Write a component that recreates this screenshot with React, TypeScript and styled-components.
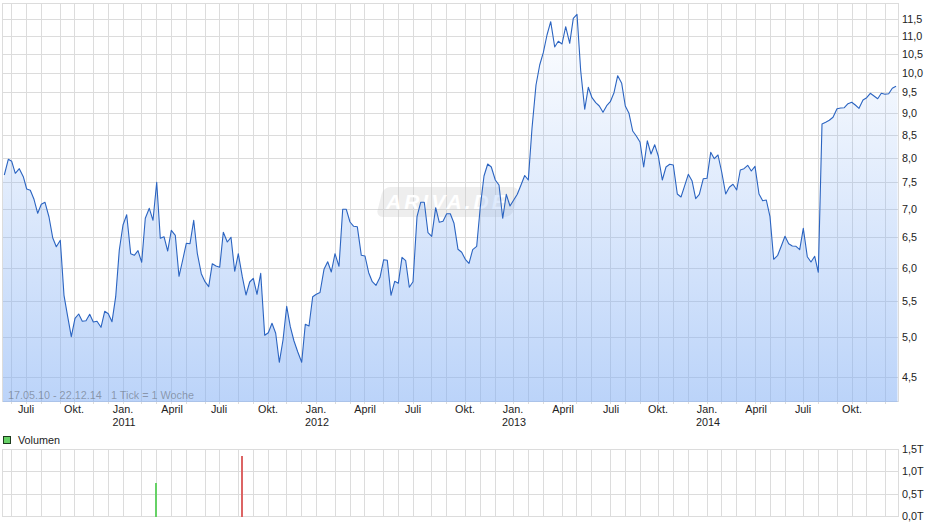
import React from "react";
import styled, { createGlobalStyle } from "styled-components";

const GlobalStyle = createGlobalStyle`
  html, body { margin: 0; padding: 0; background: #fff; }
  body { font-family: "Liberation Sans", Arial, sans-serif; }
`;

const Page = styled.div`
  width: 940px;
  height: 526px;
  display: flex;
  flex-direction: column;
  background: #fff;
  overflow: hidden;
`;

const PriceSvg = styled.svg`
  display: block;
  flex: none;
  width: 940px;
  height: 432px;
`;

const VolumeSvg = styled.svg`
  display: block;
  flex: none;
  width: 940px;
  height: 80px;
  overflow: visible;
`;

const Legend = styled.div`
  flex: none;
  height: 14px;
  box-sizing: border-box;
  padding: 2px 0 0 3px;
  display: flex;
  align-items: center;
  gap: 7px;
  font-size: 10.8px;
  color: #222;
`;

const Swatch = styled.span`
  width: 6px;
  height: 6px;
  border: 1px solid #1c3a1c;
  background: #66d166;
`;

const GridLine = styled.line`
  stroke: #dcdcdc;
  stroke-width: 1;
  shape-rendering: crispEdges;
`;

const Label = styled.text<{ $anchor?: string }>`
  font-family: "Liberation Sans", Arial, sans-serif;
  font-size: 10.8px;
  fill: #222;
  text-anchor: ${(p) => p.$anchor ?? "start"};
`;

const Note = styled.text`
  font-family: "Liberation Sans", Arial, sans-serif;
  font-size: 10.8px;
  fill: rgba(60, 60, 60, 0.42);
`;

const WatermarkText = styled.text`
  font-family: "Liberation Sans", Arial, sans-serif;
  font-size: 21px;
  font-weight: 700;
  font-style: italic;
  letter-spacing: 3px;
  fill: #ffffff;
`;

const xGrid = [
  2, 11, 26, 41, 60, 74, 93, 108, 123, 141, 156, 171, 186, 205, 219, 238, 253, 268, 286, 301, 316,
  335, 350, 364, 383, 398, 413, 431, 446, 465, 480, 495, 513, 528, 543, 562, 576, 591, 610, 625,
  640, 658, 673, 688, 707, 721, 736, 755, 770, 785, 803, 818, 837, 852, 866, 885, 898,
];

const priceLines: [number, string | null][] = [
  [3, null], [19, "11,5"], [36, "11,0"], [54, "10,5"], [73, "10,0"], [92, "9,5"], [113, "9,0"],
  [135, "8,5"], [158, "8,0"], [182, "7,5"], [209, "7,0"], [237, "6,5"], [268, "6,0"], [301, "5,5"],
  [337, "5,0"], [377, "4,5"], [401, null],
];

const volumeLines: [number, string][] = [[3, "1,5T"], [25, "1,0T"], [48, "0,5T"], [70, "0,0T"]];

const months: [number, string, string?][] = [
  [26, "Juli"], [74, "Okt."], [123, "Jan.", "2011"], [172, "April"], [219, "Juli"], [268, "Okt."],
  [316, "Jan.", "2012"], [365, "April"], [413, "Juli"], [465, "Okt."], [513, "Jan.", "2013"],
  [563, "April"], [611, "Juli"], [658, "Okt."], [707, "Jan.", "2014"], [756, "April"], [803, "Juli"],
  [852, "Okt."],
];

const pts: [number, number][] = [
  [4.3,175],[8.3,159.3],[11.7,161.3],[15.3,173.3],[19.3,168.7],[23.3,176.7],[26.7,189],[30.3,190.3],[34,199.3],[37.7,213.3],
  [41.3,204.3],[45,202.3],[49,217],[52.7,237.7],[56.3,246.7],[60.3,240.3],[64,295.3],[67.7,316.7],[71.3,336.7],[75,318.3],
  [78.7,314],[82.3,321.3],[86,320.7],[89.7,314.3],[93.3,322],[97,321.3],[101,327.3],[104.7,311.3],[108.3,313.7],[112,321.7],
  [115.7,296.7],[119.3,250],[123,225],[126.7,214.7],[130.7,253.7],[134.3,255.3],[138,250.7],[141.7,262.3],[145.3,218.3],[149.3,208.3],
  [153,220.3],[156.7,182.3],[160.3,238.3],[164,236.7],[167.7,251],[171.3,230.3],[175.3,235.3],[179,276.3],[182.7,260],[186.3,243.3],
  [190,243.7],[193.7,220.3],[197.3,253.3],[201.3,273.7],[205,281.7],[208.7,286.7],[212.3,263.7],[216,266],[219.7,267.3],[223.3,232.3],
  [227.3,242],[231,237.3],[234.7,271.3],[238.3,253.7],[242.3,276.7],[246,295],[249.7,282],[253.3,278.3],[257,294.3],[260.7,273.3],
  [264.7,335.3],[268.3,332.7],[272,323.3],[275.7,333.3],[279.3,362.3],[283,340],[286.7,306.3],[290.3,326.7],[294,341],[297.7,351.7],
  [301.7,362.3],[305.3,324.3],[309,326],[312.7,296.7],[316.3,294.3],[320,292.5],[324,269.3],[327.7,261.7],[331.3,272],[335,253.7],
  [339,266.3],[342.7,209.3],[346.3,209.3],[350,222],[353.7,226.3],[357.3,226.7],[361.3,255.3],[365,256],[368.7,272.7],[372.3,281.7],
  [376,285.3],[380,277.3],[383.7,259.7],[387.3,260.3],[391,295.3],[394.7,281.3],[398.3,283.3],[402,257.3],[405.7,260.7],[409.3,287.3],
  [413,281.7],[417,216.7],[420.7,202.3],[424.3,202.3],[428,232.7],[431.7,236.3],[435.7,207.7],[439.3,222.3],[443,221.3],[446.7,213.7],
  [450.3,213.7],[454,223.3],[458,249.3],[461.7,252.3],[465.3,259.3],[469,263.3],[472.7,249.7],[476.7,246.3],[480.3,206.7],[484,176],
  [487.7,164],[491.3,167],[495.3,180],[499,185],[502.7,218.3],[506.3,194.3],[510,206],[513.7,200],[517.3,194.3],[521,185],
  [524.7,175.5],[528.3,180],[532,128.3],[536,85],[539.7,65],[543.3,52.7],[547,35],[550.7,21.7],[554.7,47],[558.3,41.3],
  [562,44],[565.7,26.7],[569.7,43.3],[573.3,18.3],[577,14.3],[580.7,70.7],[584.7,109.3],[588.3,87.3],[592,97.7],[595.7,102.7],
  [599.3,106],[603,112.3],[606.7,105.7],[610.3,101.7],[614,92.7],[617.7,75.7],[621.7,83.3],[625.3,106],[629,113.3],[632.7,131],
  [636.3,136],[640,142],[643.7,167],[647.3,140.7],[651,154],[654.7,144.7],[658.3,156],[662.3,180],[666,167],[669.7,164.3],
  [673.3,165],[677.3,194],[681,197],[684.7,185.7],[688.3,174.3],[692,180.7],[695.7,198.7],[699.3,194.3],[703.3,178.7],[707,178.3],
  [710.7,152.3],[714.3,158.7],[718,155],[721.7,172],[725.7,194],[729.3,187.3],[733,184.3],[736.7,190],[740.3,170],[744,168.7],
  [747.7,165.3],[751.3,171],[755,166.3],[759,194],[762.7,200.7],[766.3,200],[770,216.7],[773.7,259.3],[777.7,255.3],[781.3,246],
  [785,236.3],[788.7,243.7],[792.3,246],[796,246.3],[799.7,249.7],[803.3,228.3],[807.3,256.7],[811,262],[814.7,256.3],[818.3,272.3],
  [822,124],[825.7,122.3],[829.3,120.3],[833,117.3],[837,108.7],[840.7,108],[844.3,107.7],[848,103.7],[851.7,102.3],[855.3,105],
  [859,108.3],[863,100],[866.7,97.7],[870.3,93.3],[874,96],[877.7,98.7],[881.3,93.3],[885,94.3],[888.7,93.7],[892.3,88.3],[896,86.3],
];

const linePath = pts.map(([x, y], i) => `${i ? "L" : "M"}${x} ${y}`).join(" ");
const areaPath = `M3 402 L3 181 L${linePath.slice(1)} L897.5 86 L897.5 402 Z`;

export default function App() {
  return (
    <Page>
      <GlobalStyle />
      <PriceSvg viewBox="0 0 940 432">
        <defs>
          <linearGradient id="area" gradientUnits="userSpaceOnUse" x1="0" y1="12" x2="0" y2="402">
            <stop offset="0" stopColor="#7fadf4" stopOpacity="0" />
            <stop offset="1" stopColor="#7fadf4" stopOpacity="0.53" />
          </linearGradient>
        </defs>
        {priceLines.map(([y]) => (
          <GridLine key={y} x1={2} x2={899} y1={y + 0.5} y2={y + 0.5} />
        ))}
        {xGrid.map((x) => (
          <GridLine key={x} x1={x + 0.5} x2={x + 0.5} y1={3} y2={x === 2 || x === 898 ? 402 : 404} />
        ))}
        <rect x="430" y="187" width="136" height="30" rx="7" transform="skewX(-14)" fill="rgba(200,200,200,0.3)" />
        <WatermarkText x="386" y="208.5">ARIVA.DE</WatermarkText>
        <path d={areaPath} fill="url(#area)" />
        <path d={linePath} fill="none" stroke="#2b64c1" strokeWidth="1.1" strokeLinejoin="round" />
        <Note x="8" y="399">17.05.10 - 22.12.14</Note>
        <Note x="111" y="399">1 Tick = 1 Woche</Note>
        {priceLines.map(([y, label]) =>
          label ? (
            <Label key={y} x={902} y={y + 4}>{label}</Label>
          ) : null
        )}
        {months.map(([x, month, year]) => (
          <React.Fragment key={x}>
            <Label x={x} y={413} $anchor="middle">{month}</Label>
            {year ? <Label x={x + 1} y={426} $anchor="middle">{year}</Label> : null}
          </React.Fragment>
        ))}
      </PriceSvg>
      <Legend>
        <Swatch />
        Volumen
      </Legend>
      <VolumeSvg viewBox="0 0 940 80">
        {volumeLines.map(([y]) => (
          <GridLine key={y} x1={2} x2={899} y1={y + 0.5} y2={y + 0.5} />
        ))}
        {xGrid.map((x) => (
          <GridLine key={x} x1={x + 0.5} x2={x + 0.5} y1={3} y2={71} />
        ))}
        <rect x="155" y="37" width="2" height="34" fill="#66d166" />
        <rect x="241" y="10" width="2" height="61" fill="#dc6464" />
        {volumeLines.map(([y, label]) => (
          <Label key={y} x={902} y={y + 4}>{label}</Label>
        ))}
      </VolumeSvg>
    </Page>
  );
}
